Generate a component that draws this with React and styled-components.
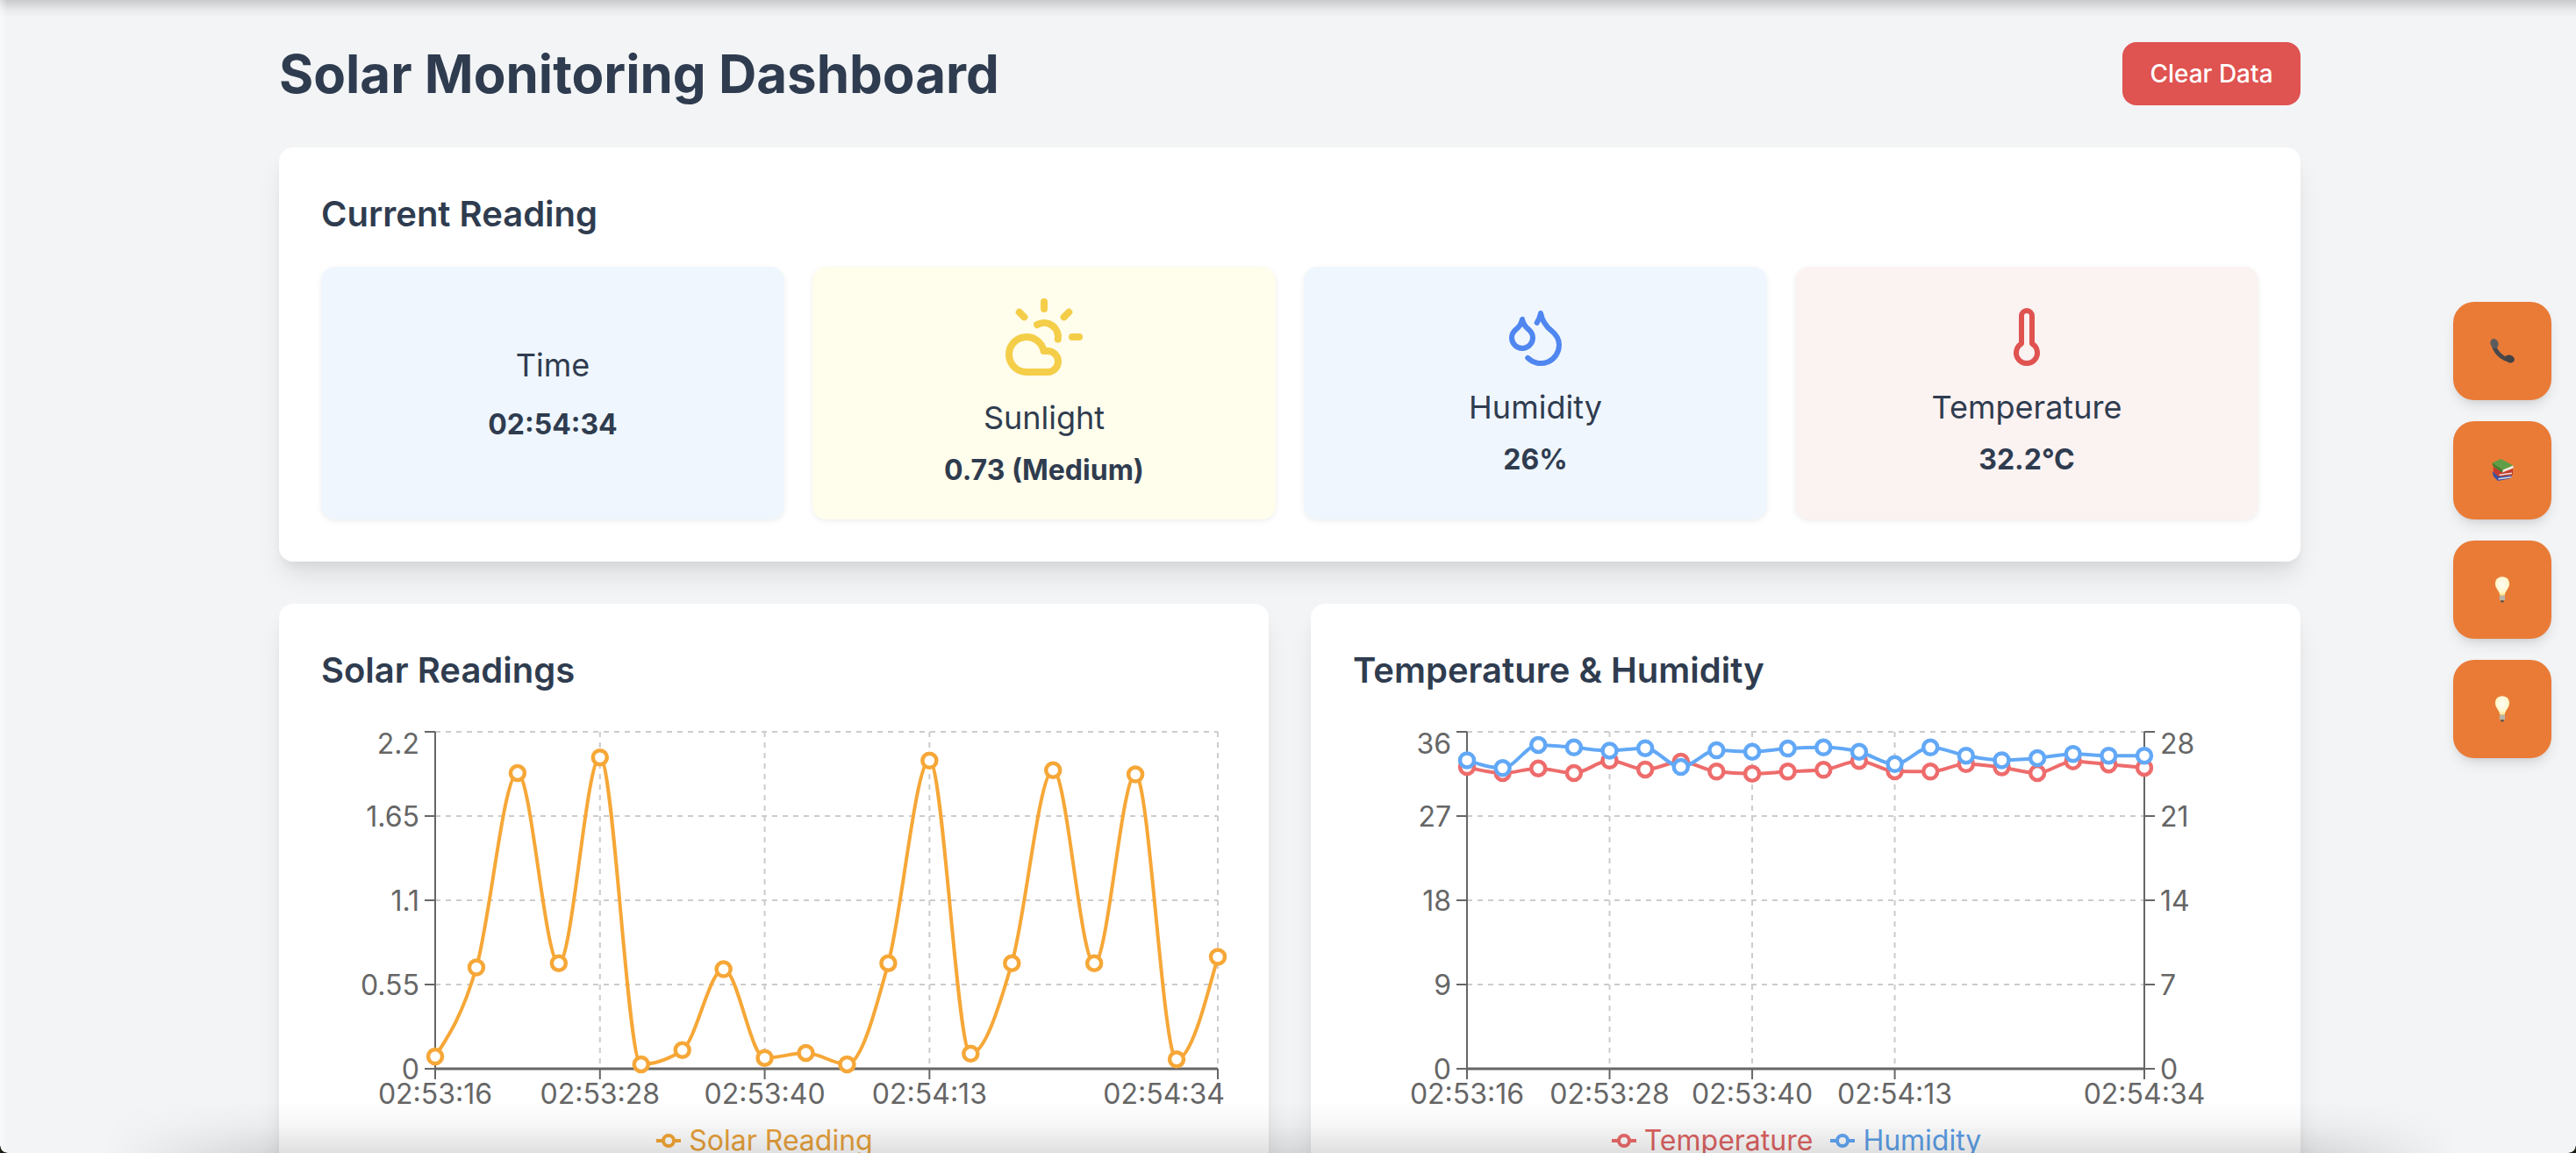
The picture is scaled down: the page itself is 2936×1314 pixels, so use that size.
import React from 'react';
import styled, { createGlobalStyle } from 'styled-components';
import { CloudSun, Droplets, Thermometer } from 'lucide-react';

const INK = '#2f3c4f';

const Global = createGlobalStyle`
  html, body { margin: 0; padding: 0; height: 1314px; overflow: hidden; background: #f3f4f6; }
  * { box-sizing: border-box; }
  body { font-family: Inter, "Liberation Sans", sans-serif; color: ${INK}; }
`;

const Page = styled.main`
  width: 2304px;
  margin: 0 0 0 318px;
  padding-top: 48px;
`;
const Header = styled.header`
  display: flex;
  justify-content: space-between;
  align-items: center;
  height: 72px;
  margin-bottom: 48px;
`;
const Title = styled.h1`
  margin: 0;
  font-size: 60px;
  line-height: 72px;
  font-weight: 700;
  color: ${INK};
`;
const ClearButton = styled.button`
  width: 203px;
  height: 72px;
  border: 0;
  border-radius: 16px;
  background: #df5351;
  color: #fff;
  font: 500 28px/40px Inter, sans-serif;
`;
const Panel = styled.section`
  background: #fff;
  border-radius: 16px;
  padding: 48px;
  box-shadow: 0 20px 30px -6px rgba(0, 0, 0, 0.1), 0 8px 12px -4px rgba(0, 0, 0, 0.05);
`;
const PanelTitle = styled.h2`
  margin: 0 0 32px;
  font-size: 40px;
  line-height: 56px;
  font-weight: 600;
  color: ${INK};
`;
const ReadingGrid = styled.div`
  display: grid;
  grid-template-columns: repeat(4, 1fr);
  gap: 32px;
`;
const ReadingCard = styled.div`
  height: 288px;
  padding: 32px;
  border-radius: 16px;
  background: ${(p) => p.$bg};
  box-shadow: 0 2px 6px rgba(0, 0, 0, 0.07);
  display: flex;
  flex-direction: column;
  align-items: center;
  justify-content: center;
  text-align: center;
`;
const IconSlot = styled.div`
  display: flex;
  margin-bottom: 16px;
  color: ${(p) => p.$color};
`;
const Label = styled.div`
  font-size: 36px;
  line-height: 56px;
  font-weight: 400;
  margin-bottom: ${(p) => p.$gap}px;
`;
const Value = styled.div`
  font-size: 32px;
  line-height: 48px;
  font-weight: 700;
`;
const ChartGrid = styled.div`
  display: grid;
  grid-template-columns: 1fr 1fr;
  gap: 48px;
  margin-top: 48px;
`;
const ChartSvg = styled.svg`
  display: block;
  width: 1032px;
  height: 450px;
  font-family: Inter, sans-serif;
`;
const Legend = styled.div`
  display: flex;
  justify-content: center;
  gap: 20px;
  height: 60px;
  margin-top: 2px;
  padding-right: 21px;
`;
const LegendItem = styled.span`
  display: inline-flex;
  align-items: center;
  gap: 9px;
  font-size: 32px;
  line-height: 48px;
  height: 48px;
  color: ${(p) => p.$color};
`;
const SideDock = styled.nav`
  position: fixed;
  top: 344px;
  right: 28px;
  display: flex;
  flex-direction: column;
  gap: 24px;
`;
const DockButton = styled.button`
  width: 112px;
  height: 112px;
  border: 0;
  padding: 0;
  border-radius: 24px;
  background: #e97b37;
  display: flex;
  align-items: center;
  justify-content: center;
  box-shadow: 0 8px 16px -4px rgba(0, 0, 0, 0.14), 0 4px 8px -4px rgba(0, 0, 0, 0.08);
`;
const TopShade = styled.div`
  position: fixed;
  inset: 0 0 auto 0;
  height: 20px;
  pointer-events: none;
  background: linear-gradient(to bottom, rgba(0, 0, 0, 0.17), rgba(0, 0, 0, 0.04) 60%, rgba(0, 0, 0, 0));
`;
const LeftShade = styled.div`
  position: fixed;
  inset: 0 auto 0 0;
  width: 8px;
  pointer-events: none;
  background: linear-gradient(to right, rgba(255, 255, 255, 0.5), rgba(255, 255, 255, 0));
`;
const BottomShade = styled.div`
  position: fixed;
  inset: auto 0 0 0;
  height: 60px;
  pointer-events: none;
  background: linear-gradient(to top, rgba(0, 0, 0, 0.12), rgba(0, 0, 0, 0.03) 55%, rgba(0, 0, 0, 0));
  mask-image: linear-gradient(to right, transparent 120px, #000 318px, #000 2622px, transparent 2800px);
`;
const Corner = styled.div`
  position: fixed;
  bottom: 0;
  ${(p) => p.$side}: 0;
  width: 8px;
  height: 8px;
  pointer-events: none;
  background: ${(p) => `radial-gradient(circle at ${p.$side === 'left' ? '100%' : '0%'} 0%, transparent 7px, #1c1c14 8px)`};
`;

const monotonePath = (pts) => {
  const n = pts.length;
  const dx = [], m = [], t = [];
  for (let i = 0; i < n - 1; i++) {
    dx[i] = pts[i + 1][0] - pts[i][0];
    m[i] = (pts[i + 1][1] - pts[i][1]) / dx[i];
  }
  const sign = (v) => (v < 0 ? -1 : 1);
  for (let i = 1; i < n - 1; i++) {
    const p = (m[i - 1] * dx[i] + m[i] * dx[i - 1]) / (dx[i - 1] + dx[i]);
    t[i] = (sign(m[i - 1]) + sign(m[i])) * Math.min(Math.abs(m[i - 1]), Math.abs(m[i]), 0.5 * Math.abs(p)) || 0;
  }
  t[0] = (3 * m[0] - t[1]) / 2;
  t[n - 1] = (3 * m[n - 2] - t[n - 2]) / 2;
  let d = `M${pts[0][0]},${pts[0][1]}`;
  for (let i = 0; i < n - 1; i++) {
    const h = dx[i] / 3;
    d += `C${pts[i][0] + h},${pts[i][1] + h * t[i]} ${pts[i + 1][0] - h},${pts[i + 1][1] - h * t[i + 1]} ${pts[i + 1][0]},${pts[i + 1][1]}`;
  }
  return d;
};

const PLOT_TOP = 10;
const PLOT_BOTTOM = 394;
const gridYs = [10, 106, 202, 298, 394];
const xLabels = ['02:53:16', '02:53:28', '02:53:40', '02:54:13', '02:54:34'];
const tickIdx = [0, 4, 8, 12, 19];
const toY = (z) => 680 + z / 2.473 - 824;

const solarZ = [1296, 1045, 497, 1033, 453, 1318, 1278, 1050, 1300, 1286, 1318, 1033, 462, 1288, 1033, 489, 1033, 501, 1304, 1015];
const tempZ = [480, 497, 484, 497, 462, 487, 465, 493, 499, 493, 488, 463, 492, 493, 472, 481, 497, 464, 473, 482];
const humZ = [461, 483, 418, 425, 434, 427, 480, 433, 437, 428, 425, 437, 472, 425, 448, 461, 455, 443, 448, 448];

const TICK = { fontSize: 32, fill: '#666' };

const Chart = ({ x0, x1, leftLabels, rightLabels, series, lastAnchor }) => {
  const xs = Array.from({ length: 20 }, (_, i) => x0 + ((x1 - x0) * i) / 19);
  return (
    <ChartSvg viewBox="0 0 1032 450">
      <g stroke="#ccc" strokeWidth="2" strokeDasharray="6 6" fill="none">
        {gridYs.map((y) => <line key={y} x1={x0} x2={x1} y1={y} y2={y} />)}
        {tickIdx.map((i) => <line key={i} x1={xs[i]} x2={xs[i]} y1={PLOT_TOP} y2={PLOT_BOTTOM} />)}
      </g>
      <g stroke="#666" strokeWidth="2" fill="none">
        <line x1={x0} x2={x0} y1={PLOT_TOP} y2={PLOT_BOTTOM} />
        <line x1={x0} x2={x1} y1={PLOT_BOTTOM} y2={PLOT_BOTTOM} strokeWidth="3" />
        {gridYs.map((y) => <line key={y} x1={x0 - 12} x2={x0} y1={y} y2={y} />)}
        {tickIdx.map((i) => <line key={i} x1={xs[i]} x2={xs[i]} y1={PLOT_BOTTOM} y2={PLOT_BOTTOM + 12} />)}
        {rightLabels && <line x1={x1} x2={x1} y1={PLOT_TOP} y2={PLOT_BOTTOM} />}
        {rightLabels && gridYs.map((y) => <line key={y} x1={x1} x2={x1 + 12} y1={y} y2={y} />)}
      </g>
      <g {...TICK}>
        {leftLabels.map((l, i) => (
          <text key={l} x={x0 - 18} y={(i === 0 ? 23 : gridYs[i]) + 12} textAnchor="end">{l}</text>
        ))}
        {rightLabels && rightLabels.map((l, i) => (
          <text key={l} x={x1 + 18} y={(i === 0 ? 23 : gridYs[i]) + 12}>{l}</text>
        ))}
        {tickIdx.map((idx, i) => (
          <text
            key={idx}
            x={i === 4 && lastAnchor ? lastAnchor : xs[idx]}
            y={PLOT_BOTTOM + 40}
            textAnchor={i === 4 && lastAnchor ? 'end' : 'middle'}
          >
            {xLabels[i]}
          </text>
        ))}
      </g>
      {series.map((s) => {
        const pts = s.z.map((z, i) => [xs[i], toY(z)]);
        return (
          <g key={s.name}>
            <path d={monotonePath(pts)} fill="none" stroke={s.color} strokeWidth="4" />
            {pts.map(([x, y]) => (
              <circle key={x} cx={x} cy={y} r="8" fill="#fff" stroke={s.color} strokeWidth="4.5" />
            ))}
          </g>
        );
      })}
    </ChartSvg>
  );
};

const LegendMark = ({ color }) => (
  <svg width="28" height="28" viewBox="0 0 28 28" fill="none">
    <line x1="0" x2="28" y1="14" y2="14" stroke={color} strokeWidth="4" />
    <circle cx="14" cy="14" r="6" fill="#fff" stroke={color} strokeWidth="4" />
  </svg>
);

const PhoneEmoji = () => (
  <svg width="30" height="30" viewBox="0 0 30 30">
    <path d="M5 5 C5 14 14 25 25 25" fill="none" stroke="#48484a" strokeWidth="5" strokeLinecap="round" />
    <ellipse cx="6" cy="6.5" rx="4.4" ry="5.6" transform="rotate(-22 6 6.5)" fill="#5c5c5f" />
    <ellipse cx="23.5" cy="24" rx="5.6" ry="4.2" transform="rotate(22 23.5 24)" fill="#434346" />
  </svg>
);
const BooksEmoji = () => (
  <svg width="25" height="27" viewBox="0 0 25 27">
    <polygon points="0.5,14 8,20 23,18.5 22,22 7,25 2,20" fill="#3a4fa0" />
    <polygon points="7.5,22 22.5,20 22,21.5 7.5,23.5" fill="#dfe0ea" />
    <polygon points="1.5,9 12,15 24,11 24,18 8,20 2,15" fill="#c43a2c" />
    <polygon points="8.5,17.5 23,15.5 23,17 8.5,19" fill="#efe2da" />
    <polygon points="0.5,4.5 10.5,0 24.5,7.5 12.5,12.5" fill="#5f9e46" />
    <polygon points="12.5,12.5 24.5,7.5 24.5,10.5 12,15.5" fill="#eeede2" />
    <polygon points="0.5,4.5 12.5,12.5 12,15.5 1.5,8.5" fill="#3f7d33" />
  </svg>
);
const BulbEmoji = ({ id }) => (
  <svg width="18" height="30" viewBox="0 0 20 33">
    <defs>
      <radialGradient id={id} cx="50%" cy="40%" r="60%">
        <stop offset="0%" stopColor="#fffef4" />
        <stop offset="65%" stopColor="#fff8d2" />
        <stop offset="100%" stopColor="#fde48a" />
      </radialGradient>
    </defs>
    <path d="M10 0 C4 0 1 4 1 9 C1 15 6 17 7 24 L13 24 C14 17 19 15 19 9 C19 4 16 0 10 0 Z" fill={`url(#${id})`} />
    <rect x="6.5" y="24" width="7" height="6" rx="1" fill="#b8b4a8" />
    <rect x="8" y="30" width="4" height="2.5" rx="1" fill="#55534e" />
  </svg>
);

const readings = [
  { label: 'Time', value: '02:54:34', bg: '#eff6fd', gap: 16 },
  { label: 'Sunlight', value: '0.73 (Medium)', bg: '#fffdec', gap: 8, Icon: CloudSun, size: 96, color: '#f4ce49' },
  { label: 'Humidity', value: '26%', bg: '#eff6fd', gap: 8, Icon: Droplets, size: 72, color: '#4f86f0' },
  { label: 'Temperature', value: '32.2°C', bg: '#fbf2f2', gap: 8, Icon: Thermometer, size: 72, color: '#df5351' },
];

const ORANGE = '#f6a737';
const RED = '#ee6c6c';
const BLUE = '#62a8f6';

export default function App() {
  return (
    <>
      <Global />
      <Page>
        <Header>
          <Title>Solar Monitoring Dashboard</Title>
          <ClearButton>Clear Data</ClearButton>
        </Header>
        <Panel>
          <PanelTitle>Current Reading</PanelTitle>
          <ReadingGrid>
            {readings.map((r) => (
              <ReadingCard key={r.label} $bg={r.bg}>
                {r.Icon && (
                  <IconSlot $color={r.color}>
                    <r.Icon size={r.size} />
                  </IconSlot>
                )}
                <Label $gap={r.gap}>{r.label}</Label>
                <Value>{r.value}</Value>
              </ReadingCard>
            ))}
          </ReadingGrid>
        </Panel>
        <ChartGrid>
          <Panel>
            <PanelTitle>Solar Readings</PanelTitle>
            <Chart
              x0={130}
              x1={1022}
              lastAnchor={1030}
              leftLabels={['2.2', '1.65', '1.1', '0.55', '0']}
              series={[{ name: 'solar', z: solarZ, color: ORANGE }]}
            />
            <Legend>
              <LegendItem $color="#e9a23c"><LegendMark color={ORANGE} />Solar Reading</LegendItem>
            </Legend>
          </Panel>
          <Panel>
            <PanelTitle>Temperature &amp; Humidity</PanelTitle>
            <Chart
              x0={130}
              x1={902}
              leftLabels={['36', '27', '18', '9', '0']}
              rightLabels={['28', '21', '14', '7', '0']}
              series={[
                { name: 'temp', z: tempZ, color: RED },
                { name: 'hum', z: humZ, color: BLUE },
              ]}
            />
            <Legend>
              <LegendItem $color="#de6463"><LegendMark color={RED} />Temperature</LegendItem>
              <LegendItem $color="#5d9fe8"><LegendMark color={BLUE} />Humidity</LegendItem>
            </Legend>
          </Panel>
        </ChartGrid>
      </Page>
      <SideDock>
        <DockButton aria-label="Call"><PhoneEmoji /></DockButton>
        <DockButton aria-label="Books"><BooksEmoji /></DockButton>
        <DockButton aria-label="Light one"><BulbEmoji id="bulbA" /></DockButton>
        <DockButton aria-label="Light two"><BulbEmoji id="bulbB" /></DockButton>
      </SideDock>
      <TopShade />
      <LeftShade />
      <BottomShade />
      <Corner $side="left" />
      <Corner $side="right" />
    </>
  );
}
